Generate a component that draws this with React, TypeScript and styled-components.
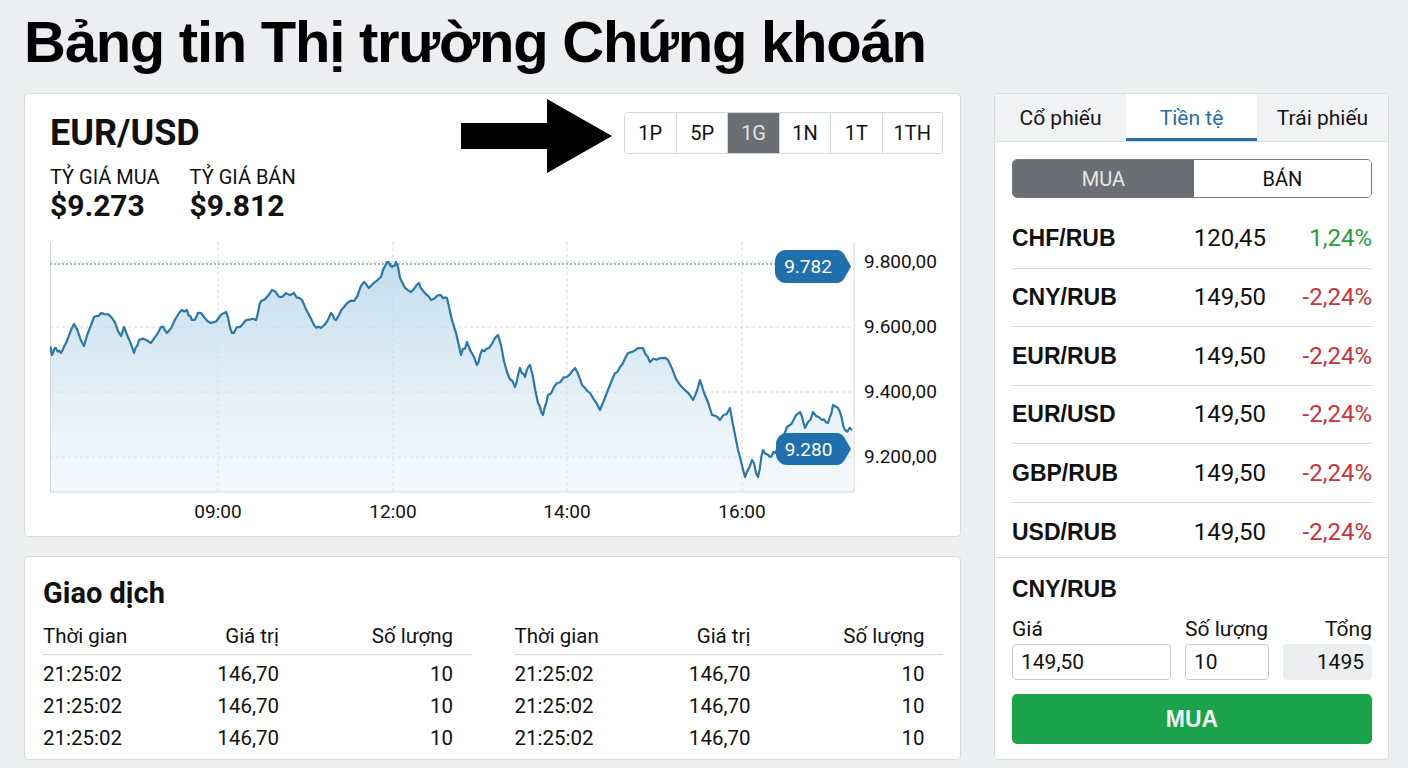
import styled, { createGlobalStyle } from 'styled-components';

const GlobalStyle = createGlobalStyle`
  body {
    margin: 0;
    background: #eceef0;
    font-family: Roboto, "Liberation Sans", Arial, sans-serif;
    color: #111;
  }
  * { box-sizing: border-box; }
`;

const Page = styled.div`
  padding: 13px 19px 0 24px;
  width: 1408px;
  height: 768px;
  overflow: hidden;
`;

const Title = styled.h1`
  margin: 0 0 22px;
  font-family: "Liberation Sans", Arial, sans-serif;
  font-weight: 700;
  font-size: 58px;
  line-height: 58px;
  letter-spacing: -1.25px;
  color: #000;
`;

const Board = styled.div`
  display: grid;
  grid-template-columns: 937px 395px;
  gap: 33px;
  height: 667px;
`;

const LeftColumn = styled.div`
  display: flex;
  flex-direction: column;
  gap: 19px;
`;

const Card = styled.section`
  background: #fff;
  border: 1px solid #d8dbde;
  border-radius: 4px;
`;

const ChartCard = styled(Card)`
  height: 444px;
  padding: 4px 17px 0 25px;
`;

const ChartHeader = styled.div`
  display: flex;
  justify-content: space-between;
  align-items: flex-start;
`;

const PairInfo = styled.div`
  padding-top: 15px;
`;

const PairTitle = styled.div`
  font-weight: 700;
  font-size: 36px;
  line-height: 40px;
  margin-bottom: 12px;
`;

const RateRow = styled.div`
  display: flex;
  gap: 30px;
`;

const RateLabel = styled.div`
  font-size: 20px;
  line-height: 24px;
`;

const RateValue = styled.div`
  font-weight: 700;
  font-size: 30px;
  line-height: 34px;
`;

const HeaderTools = styled.div`
  display: flex;
  align-items: flex-start;
  gap: 11px;
`;

const RangeGroup = styled.div`
  display: flex;
  margin-top: 14px;
  border: 1px solid #d3d6d9;
  border-radius: 4px;
  overflow: hidden;
`;

const RangeButton = styled.div<{ $active?: boolean }>`
  min-width: 51.4px;
  height: 40px;
  padding: 0 11px;
  display: flex;
  align-items: center;
  justify-content: center;
  font-size: 20px;
  color: ${(p) => (p.$active ? '#e2e3e5' : '#111')};
  background: ${(p) => (p.$active ? '#6b6e72' : '#fff')};
  & + & {
    border-left: 1px solid #d3d6d9;
  }
`;

const ChartBox = styled.div`
  margin-top: 13px;
  height: 292px;
`;

const TradesCard = styled(Card)`
  flex: 1;
  padding: 19px 17px 0 18px;
`;

const SectionTitle = styled.h2`
  margin: 0 0 14px;
  font-weight: 700;
  font-size: 29px;
  line-height: 34px;
`;

const TradesGrid = styled.div`
  display: grid;
  grid-template-columns: 1fr 1fr;
  gap: 43px;
`;

const TradeLine = styled.div<{ $head?: boolean }>`
  display: grid;
  grid-template-columns: 126px 110px 174px;
  padding-right: 18px;
  font-size: 20.5px;
  line-height: ${(p) => (p.$head ? '24px' : '32px')};
  padding-bottom: ${(p) => (p.$head ? '6px' : '0')};
  margin-bottom: ${(p) => (p.$head ? '3px' : '0')};
  border-bottom: ${(p) => (p.$head ? '1px solid #d3d6d9' : 'none')};
`;

const Cell = styled.span<{ $right?: boolean }>`
  text-align: ${(p) => (p.$right ? 'right' : 'left')};
`;

const SidePanel = styled(Card)`
  display: flex;
  flex-direction: column;
  overflow: hidden;
`;

const Tabs = styled.div`
  display: grid;
  grid-template-columns: 1fr 1fr 1fr;
  height: 48px;
  border-bottom: 1px solid #dcdfe2;
`;

const Tab = styled.div<{ $active?: boolean }>`
  display: flex;
  align-items: center;
  justify-content: center;
  font-size: 21px;
  padding-top: ${(p) => (p.$active ? '3px' : '0')};
  color: ${(p) => (p.$active ? '#2470a8' : '#151515')};
  background: ${(p) => (p.$active ? '#fff' : '#f1f2f4')};
  border-bottom: ${(p) => (p.$active ? '3px solid #2470a8' : 'none')};
`;

const PanelBody = styled.div`
  flex: 1;
  display: flex;
  flex-direction: column;
  padding: 17px 16px 0 17px;
`;

const SideToggle = styled.div`
  display: grid;
  grid-template-columns: 181px 1fr;
  height: 39px;
  border: 1.5px solid #76797d;
  border-radius: 5px;
  overflow: hidden;
`;

const ToggleButton = styled.div<{ $active?: boolean }>`
  display: flex;
  align-items: center;
  justify-content: center;
  font-size: 20px;
  color: ${(p) => (p.$active ? '#e6e7e8' : '#111')};
  background: ${(p) => (p.$active ? '#6b6e72' : '#fff')};
`;

const QuoteList = styled.div`
  flex: 1;
  display: flex;
  flex-direction: column;
  margin-top: 11px;
`;

const QuoteRow = styled.div`
  flex: 0 0 58.5px;
  display: grid;
  grid-template-columns: 1fr 110px 106px;
  align-items: center;
  & + & {
    border-top: 1px solid #d6d9dc;
  }
  &:last-child {
    flex: 1 1 auto;
    padding-top: 4px;
  }
`;

const PairName = styled.span`
  font-family: "Liberation Sans", Arial, sans-serif;
  font-weight: 700;
  font-size: 23px;
  line-height: 28px;
`;

const QuotePrice = styled.span`
  font-size: 24px;
  text-align: right;
`;

const QuoteChange = styled.span<{ $up?: boolean }>`
  font-size: 24px;
  text-align: right;
  color: ${(p) => (p.$up ? '#2f9a3f' : '#c8333b')};
`;

const OrderBox = styled.div`
  border-top: 1px solid #d6d9dc;
  padding: 17px 16px 15px 17px;
`;

const OrderGrid = styled.div`
  display: grid;
  grid-template-columns: 159px 84px 89px;
  column-gap: 14px;
  row-gap: 3px;
  margin: 14px 0 14px;
`;

const FieldLabel = styled.div<{ $right?: boolean }>`
  font-size: 21px;
  line-height: 24px;
  text-align: ${(p) => (p.$right ? 'right' : 'left')};
`;

const FieldInput = styled.input`
  height: 36px;
  width: 100%;
  border: 1px solid #c9ccd0;
  border-radius: 4px;
  padding: 0 8px;
  font-family: Roboto, sans-serif;
  font-size: 21px;
  color: #111;
  background: #fff;
  outline: none;
`;

const TotalBox = styled.div`
  height: 36px;
  border-radius: 4px;
  background: #eceef0;
  display: flex;
  align-items: center;
  justify-content: flex-end;
  padding-right: 8px;
  font-size: 21px;
`;

const BuyButton = styled.button`
  width: 100%;
  height: 50px;
  border: none;
  border-radius: 5px;
  background: #1aa34a;
  color: #eef8f1;
  font-family: "Liberation Sans", Arial, sans-serif;
  font-weight: 700;
  font-size: 23px;
`;

const keyPts: [number, number][] = [
  [50, 347], [52, 355], [56, 348], [61, 353], [66, 343], [74, 324], [84, 346], [94, 317],
  [101, 313], [112, 318], [121, 336], [124, 327], [134, 353], [139, 340], [151, 343],
  [161, 327], [167, 333], [179, 313], [187, 310], [192, 320], [201, 313], [211, 323],
  [226, 312], [232, 333], [237, 327], [246, 320], [256, 320], [261, 301], [272, 290],
  [282, 297], [294, 293], [302, 300], [314, 325], [321, 328], [331, 313], [336, 320],
  [344, 307], [354, 301], [364, 282], [369, 288], [381, 277], [387, 262], [392, 267],
  [396, 262], [402, 282], [411, 292], [419, 283], [424, 292], [431, 300], [441, 295],
  [447, 298], [461, 355], [467, 342], [477, 365], [482, 350], [489, 348], [498, 335],
  [507, 372], [515, 387], [520, 368], [525, 377], [530, 365], [538, 403], [543, 415],
  [548, 395], [557, 383], [567, 377], [575, 368], [582, 385], [590, 393], [600, 410],
  [612, 380], [620, 367], [628, 353], [643, 348], [650, 362], [660, 358], [668, 360],
  [680, 385], [693, 400], [700, 380], [712, 415], [720, 420], [730, 408], [738, 450],
  [745, 477], [752, 460], [758, 477], [763, 450], [770, 457], [775, 453], [787, 427],
  [800, 412], [805, 428], [813, 412], [822, 420], [828, 423], [833, 405], [840, 412],
  [845, 430], [852, 430],
];

function buildLine() {
  let seed = 11;
  const rand = () => {
    seed = (seed * 16807) % 2147483647;
    return seed / 2147483647;
  };
  const pts: [number, number][] = [];
  keyPts.forEach(([x, y], i) => {
    pts.push([x - 50, y - 236]);
    const next = keyPts[i + 1];
    if (!next) return;
    for (const t of [0.34, 0.67]) {
      const px = x + (next[0] - x) * t;
      const py = y + (next[1] - y) * t + (rand() - 0.5) * 5;
      pts.push([px - 50, py - 236]);
    }
  });
  return pts;
}

const linePts = buildLine();
const linePath = linePts.map(([x, y], i) => `${i ? 'L' : 'M'}${x.toFixed(1)},${y.toFixed(1)}`).join(' ');
const areaPath = `${linePath} L${linePts[linePts.length - 1][0]},256 L0,256 Z`;

const gridY = [26, 91, 156, 221];
const gridX = [168, 343, 517, 692];
const yLabels = ['9.800,00', '9.600,00', '9.400,00', '9.200,00'];
const xLabels = ['09:00', '12:00', '14:00', '16:00'];

function badgePath(x: number, y: number, w: number, h: number) {
  const r = 11;
  const m = y + h / 2;
  return `M${x + r},${y} L${x + w - 4},${y} Q${x + w},${y} ${x + w + 3},${y + 4} L${x + w + 10},${m} L${x + w + 3},${y + h - 4} Q${x + w},${y + h} ${x + w - 4},${y + h} L${x + r},${y + h} A${r},${r} 0 0 1 ${x},${y + h - r} L${x},${y + r} A${r},${r} 0 0 1 ${x + r},${y} Z`;
}

function PriceChart() {
  return (
    <svg width="893" height="292" viewBox="0 0 893 292">
      <defs>
        <linearGradient id="area" x1="0" y1="0" x2="0" y2="1">
          <stop offset="0" stopColor="#b9d6ea" stopOpacity="0.85" />
          <stop offset="1" stopColor="#eaf3f9" stopOpacity="0.5" />
        </linearGradient>
      </defs>
      {gridY.map((y) => (
        <line key={y} x1="0" x2="804" y1={y} y2={y} stroke="#cfd3d7" strokeDasharray="3 3" />
      ))}
      {gridX.map((x) => (
        <line key={x} x1={x} x2={x} y1="6" y2="256" stroke="#cfd3d7" strokeDasharray="3 3" />
      ))}
      <path d={areaPath} fill="url(#area)" />
      <line x1="0.5" x2="0.5" y1="6" y2="256" stroke="#d3d6d9" />
      <line x1="804" x2="804" y1="6" y2="256" stroke="#d3d6d9" />
      <line x1="0" x2="804" y1="256" y2="256" stroke="#d3d6d9" />
      <line x1="0" x2="726" y1="28" y2="28" stroke="#3b7bab" strokeDasharray="2 2" />
      <path d={linePath} fill="none" stroke="#2c77a6" strokeWidth="2.2" strokeLinejoin="round" />
      <path d={badgePath(725, 14, 66, 33)} fill="#1f70ad" />
      <text x="758" y="36.5" fill="#fff" fontSize="19" textAnchor="middle" fontFamily="Roboto, sans-serif">9.782</text>
      <path d={badgePath(726, 197, 65, 32)} fill="#1f70ad" />
      <text x="758.5" y="219.5" fill="#fff" fontSize="19" textAnchor="middle" fontFamily="Roboto, sans-serif">9.280</text>
      {yLabels.map((l, i) => (
        <text key={l} x="814" y={gridY[i] + 6} fontSize="19" fill="#111" fontFamily="Roboto, sans-serif">{l}</text>
      ))}
      {xLabels.map((l, i) => (
        <text key={l} x={gridX[i]} y="282" fontSize="19" fill="#111" textAnchor="middle" fontFamily="Roboto, sans-serif">{l}</text>
      ))}
    </svg>
  );
}

function Arrow() {
  return (
    <svg width="152" height="76" viewBox="0 0 152 76">
      <polygon points="0,25 86,25 86,1 151,38 86,75 86,51 0,51" fill="#000" />
    </svg>
  );
}

const ranges = ['1P', '5P', '1G', '1N', '1T', '1TH'];
const quotes = [
  { pair: 'CHF/RUB', price: '120,45', change: '1,24%', up: true },
  { pair: 'CNY/RUB', price: '149,50', change: '-2,24%' },
  { pair: 'EUR/RUB', price: '149,50', change: '-2,24%' },
  { pair: 'EUR/USD', price: '149,50', change: '-2,24%' },
  { pair: 'GBP/RUB', price: '149,50', change: '-2,24%' },
  { pair: 'USD/RUB', price: '149,50', change: '-2,24%' },
];
const trades = [0, 1, 2];

function TradeTable() {
  return (
    <div>
      <TradeLine $head>
        <Cell>Thời gian</Cell>
        <Cell $right>Giá trị</Cell>
        <Cell $right>Số lượng</Cell>
      </TradeLine>
      {trades.map((t) => (
        <TradeLine key={t}>
          <Cell>21:25:02</Cell>
          <Cell $right>146,70</Cell>
          <Cell $right>10</Cell>
        </TradeLine>
      ))}
    </div>
  );
}

export default function App() {
  return (
    <Page>
      <GlobalStyle />
      <Title>Bảng tin Thị trường Chứng khoán</Title>
      <Board>
        <LeftColumn>
          <ChartCard>
            <ChartHeader>
              <PairInfo>
                <PairTitle>EUR/USD</PairTitle>
                <RateRow>
                  <div>
                    <RateLabel>TỶ GIÁ MUA</RateLabel>
                    <RateValue>$9.273</RateValue>
                  </div>
                  <div>
                    <RateLabel>TỶ GIÁ BÁN</RateLabel>
                    <RateValue>$9.812</RateValue>
                  </div>
                </RateRow>
              </PairInfo>
              <HeaderTools>
                <Arrow />
                <RangeGroup>
                  {ranges.map((r) => (
                    <RangeButton key={r} $active={r === '1G'}>{r}</RangeButton>
                  ))}
                </RangeGroup>
              </HeaderTools>
            </ChartHeader>
            <ChartBox>
              <PriceChart />
            </ChartBox>
          </ChartCard>
          <TradesCard>
            <SectionTitle>Giao dịch</SectionTitle>
            <TradesGrid>
              <TradeTable />
              <TradeTable />
            </TradesGrid>
          </TradesCard>
        </LeftColumn>
        <SidePanel>
          <Tabs>
            <Tab>Cổ phiếu</Tab>
            <Tab $active>Tiền tệ</Tab>
            <Tab>Trái phiếu</Tab>
          </Tabs>
          <PanelBody>
            <SideToggle>
              <ToggleButton $active>MUA</ToggleButton>
              <ToggleButton>BÁN</ToggleButton>
            </SideToggle>
            <QuoteList>
              {quotes.map((q) => (
                <QuoteRow key={q.pair}>
                  <PairName>{q.pair}</PairName>
                  <QuotePrice>{q.price}</QuotePrice>
                  <QuoteChange $up={q.up}>{q.change}</QuoteChange>
                </QuoteRow>
              ))}
            </QuoteList>
          </PanelBody>
          <OrderBox>
            <PairName>CNY/RUB</PairName>
            <OrderGrid>
              <FieldLabel>Giá</FieldLabel>
              <FieldLabel>Số lượng</FieldLabel>
              <FieldLabel $right>Tổng</FieldLabel>
              <FieldInput defaultValue="149,50" />
              <FieldInput defaultValue="10" />
              <TotalBox>1495</TotalBox>
            </OrderGrid>
            <BuyButton>MUA</BuyButton>
          </OrderBox>
        </SidePanel>
      </Board>
    </Page>
  );
}
